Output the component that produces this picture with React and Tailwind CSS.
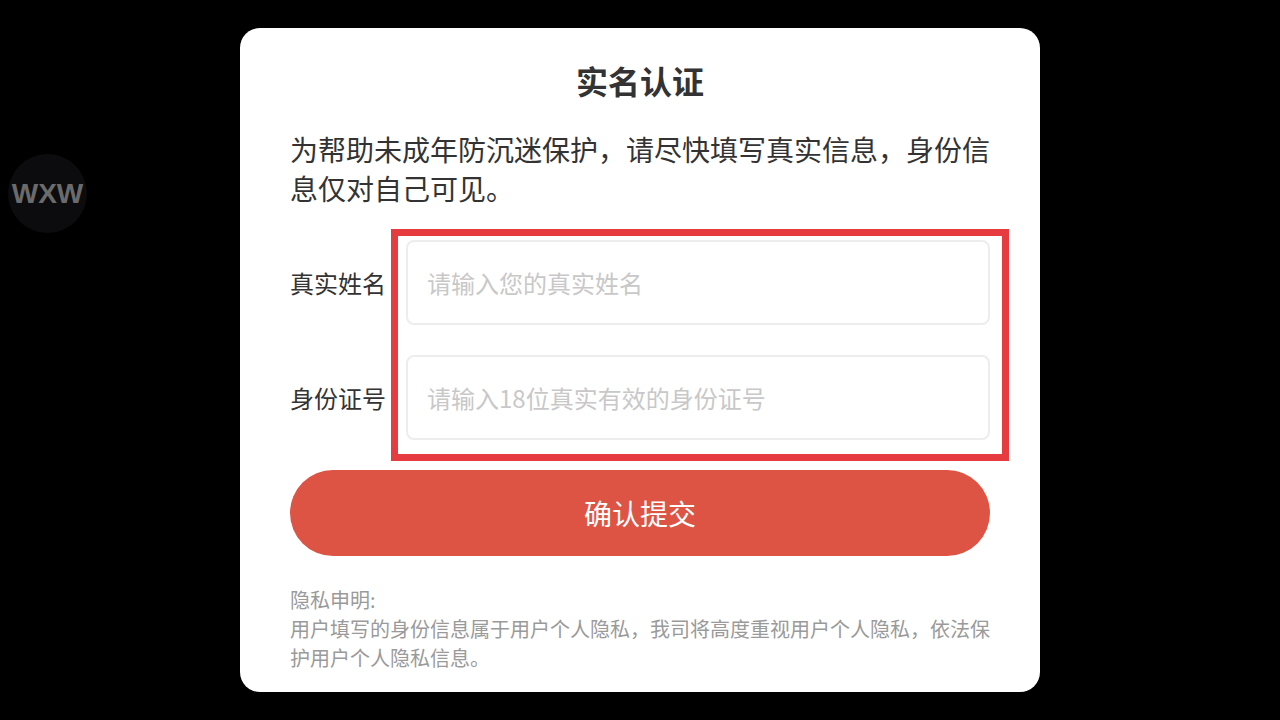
const cjk = { fontFamily: '"Noto Sans CJK SC", "Noto Sans", sans-serif' };

function Field({ label, placeholder }) {
  return (
    <div className="flex items-center h-[85px]">
      <div className="w-[116px] text-[24px] text-[#333]">{label}</div>
      <input
        className="flex-1 h-full rounded-[8px] border-2 border-[#ededed] bg-white pl-[19px] text-[24px] text-[#333] outline-none placeholder:text-[#c8c8c8]"
        style={cjk}
        placeholder={placeholder}
      />
    </div>
  );
}

export default function App() {
  return (
    <div className="relative w-[1280px] h-[720px] bg-black overflow-hidden" style={cjk}>
      {/* floating badge */}
      <div className="absolute left-[8px] top-[154px] w-[79px] h-[79px] rounded-full bg-[#0c0c0e] flex items-center justify-center">
        <span
          className="text-[28px] font-bold text-[#6b6b6b] leading-none"
          style={{ fontFamily: '"Liberation Sans", Arial, sans-serif' }}
        >
          WXW
        </span>
      </div>

      <div className="flex justify-center pt-[28px]">
        <div className="w-[800px] h-[664px] bg-white rounded-[20px] px-[50px] pt-[30px]">
          {/* Title */}
          <h1 className="text-center text-[32px] font-bold leading-[44px] text-[#333]">实名认证</h1>

          {/* Description */}
          <p className="mt-[28px] text-[28px] leading-[39px] text-[#333]">
            为帮助未成年防沉迷保护，请尽快填写真实信息，身份信息仅对自己可见。
          </p>

          {/* Form */}
          <div className="relative mt-[32px] flex flex-col gap-[30px]">
            <Field label="真实姓名" placeholder="请输入您的真实姓名" />
            <Field label="身份证号" placeholder="请输入18位真实有效的身份证号" />
            <div className="absolute left-[101px] top-[-11px] w-[618px] h-[232px] border-[7px] border-[#e63c3f] pointer-events-none" />
          </div>

          {/* Submit */}
          <button className="mt-[30px] w-full h-[86px] rounded-full bg-[#dd5444] text-white text-[28px]">
            确认提交
          </button>

          {/* Privacy */}
          <div className="mt-[29px] text-[20px] leading-[29px] text-[#9a9a9a]">
            <p>隐私申明:</p>
            <p>用户填写的身份信息属于用户个人隐私，我司将高度重视用户个人隐私，依法保护用户个人隐私信息。</p>
          </div>
        </div>
      </div>
    </div>
  );
}
